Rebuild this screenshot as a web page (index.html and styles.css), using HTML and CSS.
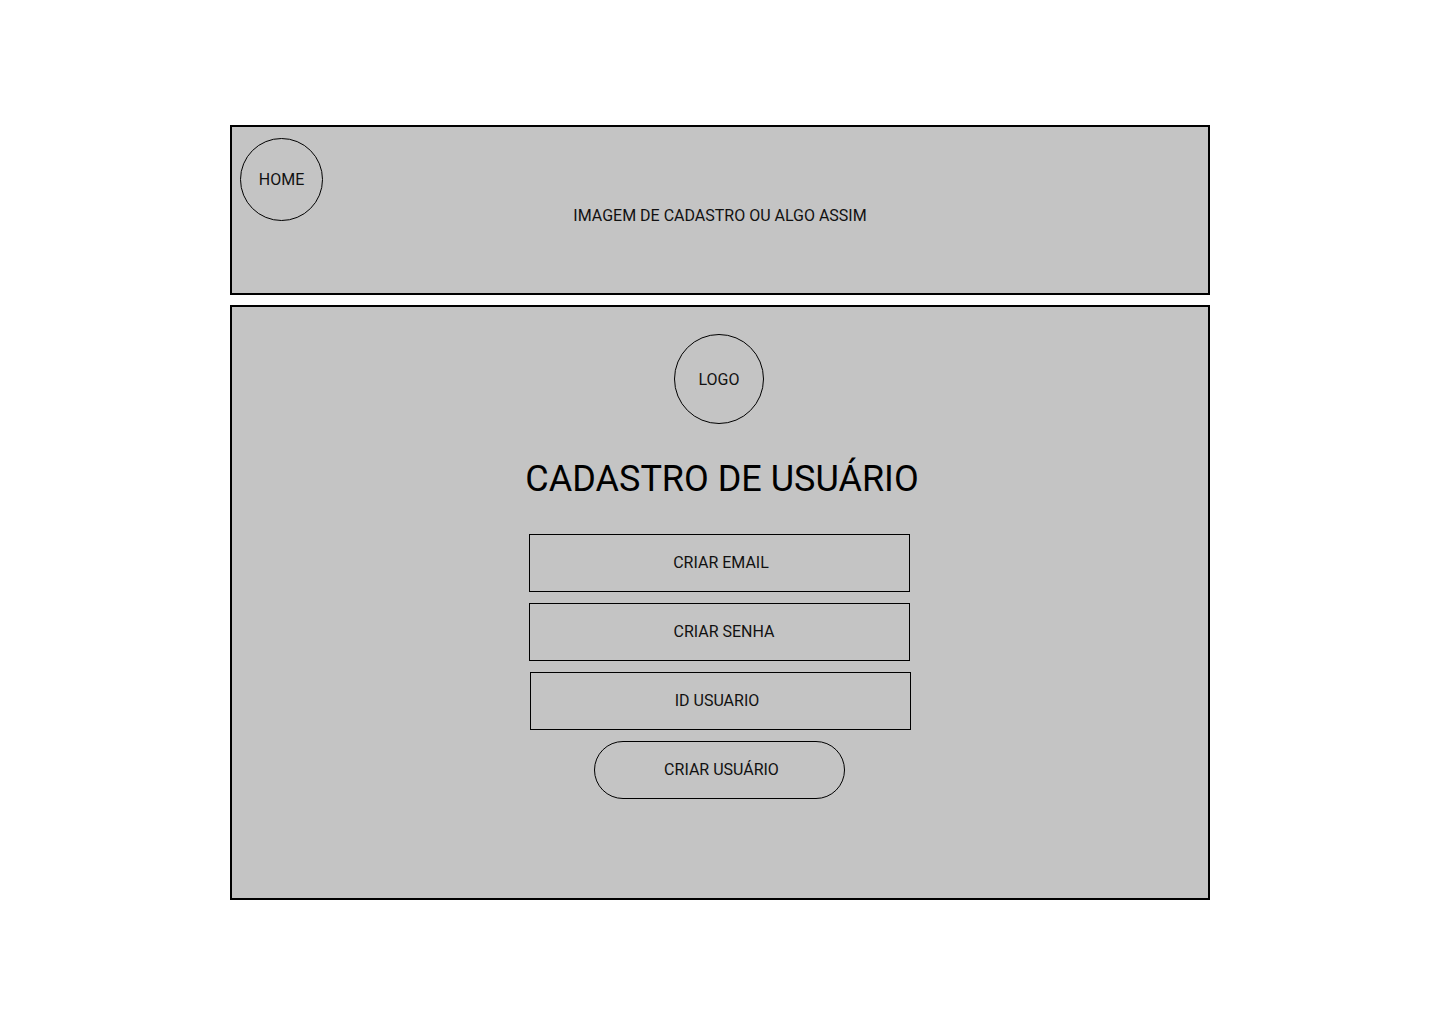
FILE: index.html
```html
<!DOCTYPE html>
<html lang="pt-BR">
<head>
<meta charset="utf-8">
<title>Cadastro de Usuário</title>
<link rel="stylesheet" href="styles.css">
</head>
<body>
<div class="page">
  <header class="banner">
    <div class="circle home">HOME</div>
    <div class="banner-text">IMAGEM DE CADASTRO OU ALGO ASSIM</div>
    <div></div>
  </header>
  <main class="card">
    <div class="circle logo">LOGO</div>
    <h1 class="title">CADASTRO DE USUÁRIO</h1>
    <div class="fields">
      <div class="field email">CRIAR EMAIL</div>
      <div class="field senha">CRIAR SENHA</div>
      <div class="field shifted">ID USUARIO</div>
      <div class="btn">CRIAR USUÁRIO</div>
    </div>
  </main>
</div>
</body>
</html>
```
FILE: styles.css
```css
* { box-sizing: border-box; }
html, body { margin: 0; padding: 0; background: #fff; }
body {
  font-family: Roboto, "Liberation Sans", Arial, sans-serif;
  color: #111;
}
.page {
  width: 980px;
  margin-left: 230px;
  padding-top: 125px;
  display: flex;
  flex-direction: column;
  gap: 10px;
}
.banner {
  height: 170px;
  border: 2px solid #000;
  background: #c4c4c4;
  padding: 11px 8px;
  display: grid;
  grid-template-columns: 83px 1fr 83px;
  align-items: start;
}
.circle {
  border: 1px solid #000;
  border-radius: 50%;
  display: flex;
  align-items: center;
  justify-content: center;
  font-size: 16px;
}
.home { width: 83px; height: 83px; }
.banner-text {
  margin-top: 68px;
  text-align: center;
  font-size: 16px;
  line-height: 19px;
}
.card {
  height: 595px;
  border: 2px solid #000;
  background: #c4c4c4;
  padding-top: 27px;
  display: flex;
  flex-direction: column;
  align-items: center;
}
.logo { width: 90px; height: 90px; margin-left: -2px; }
.title {
  margin: 34px 0 0 4px;
  font-size: 36px;
  font-weight: 400;
  line-height: 42px;
  color: #000;
}
.fields {
  margin-top: 34px;
  display: flex;
  flex-direction: column;
  align-items: center;
  gap: 11px;
}
.field {
  width: 381px;
  height: 58px;
  border: 1px solid #000;
  display: flex;
  align-items: center;
  justify-content: center;
  font-size: 16px;
  margin-left: -2px;
  padding-bottom: 2px;
}
.field.email { padding-left: 4px; }
.field.senha { padding-left: 10px; }
.field.shifted { margin-left: 0; padding-right: 6px; }
.btn {
  width: 251px;
  height: 58px;
  border: 1px solid #000;
  border-radius: 29px;
  display: flex;
  align-items: center;
  justify-content: center;
  font-size: 16px;
  margin-left: -1px;
  padding-left: 4px;
  padding-bottom: 2px;
}
```
